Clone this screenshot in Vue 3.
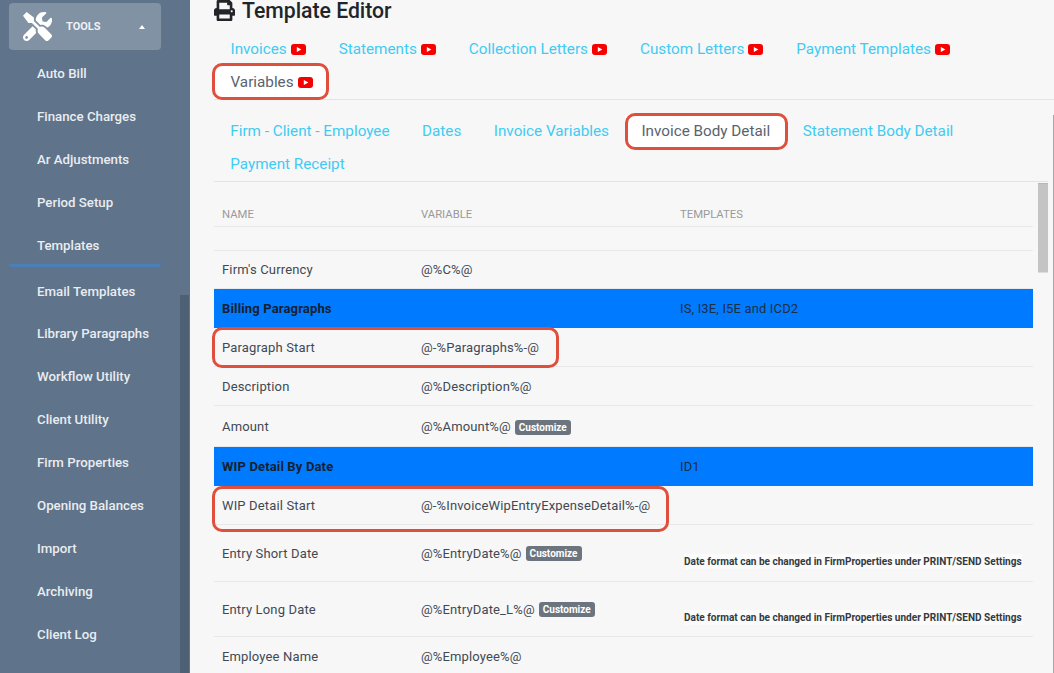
<template>
  <div class="page">
    <aside class="sidebar">
      <div class="tools-btn">
        <svg class="tools-icon" viewBox="0 0 512 512">
          <path fill="currentColor" d="M501.1 395.7L384 278.6c-23.1-23.1-57.6-27.6-85.4-13.9L192 158.1V96L64 0 0 64l96 128h62.1l106.6 106.6c-13.6 27.8-9.2 62.3 13.9 85.4l117.1 117.1c14.6 14.6 38.2 14.6 52.7 0l52.7-52.7c14.5-14.6 14.5-38.2 0-52.7zM331.7 225c28.3 0 54.9 11 74.9 31l19.4 19.4c15.8-6.9 30.8-16.5 43.8-29.5 37.1-37.1 49.7-89.3 37.9-136.7-2.2-9-13.5-12.1-20.1-5.5l-74.4 74.4-67.9-11.3L334 98.9l74.4-74.4c6.6-6.6 3.4-17.9-5.7-20.2-47.4-11.7-99.6.9-136.6 37.9-28.5 28.5-41.9 66.1-41.2 103.6l82.1 82.1c8.1-1.9 16.5-2.9 24.7-2.9zm-103.9 82l-56.7-56.7L18.7 402.8c-25 25-25 65.5 0 90.5s65.5 25 90.5 0l123.6-123.6c-7.6-19.9-9.9-41.6-5-62.7zM64 472c-13.2 0-24-10.8-24-24 0-13.3 10.7-24 24-24s24 10.7 24 24c0 13.2-10.7 24-24 24z"/>
        </svg>
        <span class="tools-label">TOOLS</span>
        <span class="caret"></span>
      </div>
      <nav class="side-list">
        <a v-for="item in sideItems" :key="item" class="side-item" :class="{ current: item === 'Templates' }">{{ item }}</a>
      </nav>
      <div class="side-scroll"></div>
    </aside>

    <main class="content">
      <h1 class="title">
        <svg class="print-icon" viewBox="0 0 512 512">
          <path fill="currentColor" d="M448 192V77.25c0-8.49-3.37-16.62-9.37-22.63L393.37 9.37c-6-6-14.14-9.37-22.63-9.37H96C78.33 0 64 14.33 64 32v160c-35.35 0-64 28.65-64 64v112c0 8.84 7.16 16 16 16h48v96c0 17.67 14.33 32 32 32h320c17.67 0 32-14.33 32-32v-96h48c8.84 0 16-7.16 16-16V256c0-35.35-28.65-64-64-64zm-64 256H128v-96h256v96zm0-224H128V64h192v48c0 8.84 7.16 16 16 16h48v96zm48 72c-13.25 0-24-10.75-24-24 0-13.26 10.75-24 24-24s24 10.74 24 24c0 13.25-10.75 24-24 24z"/>
        </svg>
        Template Editor
      </h1>

      <div class="tabs main-tabs">
        <a v-for="tab in mainTabs" :key="tab" class="tab" :class="{ active: tab === 'Variables' }">
          {{ tab }}
          <svg class="yt" viewBox="0 0 15 11">
            <rect width="15" height="11" rx="3" fill="#f70000" />
            <path d="M5.8 3 L10.4 5.5 L5.8 8 Z" fill="#fff" />
          </svg>
        </a>
      </div>

      <div class="tabs sub-tabs">
        <a v-for="tab in subTabs" :key="tab" class="tab" :class="{ active: tab === 'Invoice Body Detail' }">{{ tab }}</a>
      </div>

      <div class="table-wrap">
        <div class="table">
          <div class="row head">
            <div>Name</div>
            <div>Variable</div>
            <div>Templates</div>
          </div>
          <div class="row blank"></div>
          <div v-for="row in rows" :key="row.name" class="row" :class="[row.kind]">
            <div>{{ row.name }}</div>
            <div class="var-cell">
              {{ row.variable }}
              <span v-if="row.custom" class="badge">Customize</span>
            </div>
            <div class="tpl-cell">
              <span v-if="row.note" class="note">{{ row.note }}</span>
              <template v-else>{{ row.templates }}</template>
            </div>
          </div>
        </div>
        <div class="scroll-track"><div class="scroll-thumb"></div></div>
      </div>

      <div class="edge-line"></div>

      <!-- red annotation boxes drawn on top of the screenshot -->
      <div class="mark mark-variables"></div>
      <div class="mark mark-body"></div>
      <div class="mark mark-paragraph"></div>
      <div class="mark mark-wip"></div>
    </main>
  </div>
</template>

<script setup>
const sideItems = [
  'Auto Bill',
  'Finance Charges',
  'Ar Adjustments',
  'Period Setup',
  'Templates',
  'Email Templates',
  'Library Paragraphs',
  'Workflow Utility',
  'Client Utility',
  'Firm Properties',
  'Opening Balances',
  'Import',
  'Archiving',
  'Client Log',
  'Client Transfer',
]

const mainTabs = ['Invoices', 'Statements', 'Collection Letters', 'Custom Letters', 'Payment Templates', 'Variables']

const subTabs = ['Firm - Client - Employee', 'Dates', 'Invoice Variables', 'Invoice Body Detail', 'Statement Body Detail', 'Payment Receipt']

const dateNote = 'Date format can be changed in FirmProperties under PRINT/SEND Settings'

const rows = [
  { name: "Firm's Currency", variable: '@%C%@', kind: 'plain first' },
  { name: 'Billing Paragraphs', variable: '', templates: 'IS, I3E, I5E and ICD2', kind: 'section' },
  { name: 'Paragraph Start', variable: '@-%Paragraphs%-@', kind: 'plain' },
  { name: 'Description', variable: '@%Description%@', kind: 'plain' },
  { name: 'Amount', variable: '@%Amount%@', custom: true, kind: 'plain wide' },
  { name: 'WIP Detail By Date', variable: '', templates: 'ID1', kind: 'section' },
  { name: 'WIP Detail Start', variable: '@-%InvoiceWipEntryExpenseDetail%-@', kind: 'plain' },
  { name: 'Entry Short Date', variable: '@%EntryDate%@', custom: true, note: dateNote, kind: 'tall short-date' },
  { name: 'Entry Long Date', variable: '@%EntryDate_L%@', custom: true, note: dateNote, kind: 'tall' },
  { name: 'Employee Name', variable: '@%Employee%@', kind: 'plain' },
]
</script>

<style>
html,
body {
  margin: 0;
  height: 100%;
  overflow: hidden;
}
</style>

<style scoped>
.page {
  display: flex;
  height: 673px;
  overflow: hidden;
  font-family: Roboto, "Liberation Sans", sans-serif;
  background: #f7f7f7;
}

.sidebar {
  position: relative;
  width: 190px;
  flex-shrink: 0;
  background: #5f738a;
  padding: 3px 0 0 0;
  box-sizing: border-box;
  overflow: hidden;
}

.tools-btn {
  display: flex;
  align-items: center;
  width: 152px;
  height: 47px;
  margin-left: 9px;
  background: #8192a4;
  border-radius: 4px;
  color: #fff;
}

.tools-icon {
  width: 29px;
  height: 29px;
  margin-left: 14px;
  flex-shrink: 0;
}

.tools-label {
  margin-left: 14px;
  font-size: 11px;
  font-weight: 700;
  color: #eef1f4;
}

.caret {
  margin-left: 38px;
  width: 0;
  height: 0;
  border-left: 3.5px solid transparent;
  border-right: 3.5px solid transparent;
  border-bottom: 4px solid #fff;
}

.side-list {
  display: flex;
  flex-direction: column;
  padding-top: 3.4px;
}

.side-item {
  display: block;
  height: 42.9px;
  line-height: 42px;
  padding-left: 37px;
  font-size: 13.25px;
  font-weight: 500;
  color: #e9edf1;
}

.side-item:last-child {
  margin-top: 1px;
}

.side-item.current {
  width: 152px;
  margin-left: 9px;
  padding-left: 28px;
  height: 42px;
  margin-bottom: 3.6px;
  box-sizing: border-box;
  border-bottom: 3px solid #4a7fb8;
  border-radius: 0 0 3px 3px;
}

.side-scroll {
  position: absolute;
  left: 180px;
  top: 295px;
  bottom: 0;
  width: 9px;
  background: #4d6074;
}

.content {
  position: relative;
  flex: 1;
  min-width: 0;
  padding-left: 24px;
  background: #f7f7f7;
}

.title {
  display: flex;
  align-items: center;
  gap: 7px;
  height: 33px;
  margin: 0;
  padding-bottom: 12px;
  box-sizing: border-box;
  font-size: 21.2px;
  line-height: 1;
  font-weight: 500;
  color: #212529;
}

.print-icon {
  width: 21px;
  height: 21px;
}

.tabs {
  display: flex;
  flex-wrap: wrap;
  border-bottom: 1px solid #e3e4e6;
}

.tab {
  display: flex;
  align-items: center;
  gap: 4px;
  height: 33px;
  padding: 0 16.5px 1px;
  font-size: 15.25px;
  color: #3fcbf3;
  white-space: nowrap;
  box-sizing: border-box;
}

.tab.active {
  background: #fff;
  color: #59636e;
}

.yt {
  width: 15px;
  height: 11px;
  flex-shrink: 0;
}

.sub-tabs {
  width: 834px;
  padding-top: 15px;
}

.sub-tabs .tab {
  padding: 0 16.25px 1px;
}

.table-wrap {
  position: relative;
  padding-top: 1px;
}

.table {
  width: 819px;
  font-size: 13px;
  letter-spacing: 0.15px;
  color: #3f4954;
}

.row {
  display: grid;
  grid-template-columns: 199px 259px 1fr;
  align-items: center;
  height: 39px;
  padding-left: 8px;
  box-sizing: border-box;
  border-bottom: 1px solid #e8e8e8;
}

.row.head {
  height: 44px;
  padding-top: 19px;
  font-size: 11.3px;
  letter-spacing: 0;
  color: #9a9a9a;
  text-transform: uppercase;
}

.row.blank {
  height: 24px;
}

.row.first {
  height: 38px;
  padding-bottom: 1px;
}

.row.wide {
  height: 41px;
}

.row.section {
  height: 39px;
  padding-bottom: 1px;
  background: #007bff;
  border-bottom: 0;
  color: #1d2e45;
}

.row.section > div:first-child {
  font-weight: 700;
  color: #16202e;
}

.row.tall {
  align-items: start;
  height: 55px;
  padding-top: 20px;
}

.row.short-date {
  height: 57px;
  padding-top: 21px;
}

.var-cell {
  display: flex;
  align-items: center;
  gap: 4px;
}

.badge {
  margin-top: 2px;
  padding: 2px 4px;
  border-radius: 3px;
  background: #6c757d;
  color: #fff;
  font-size: 10px;
  font-weight: 700;
  letter-spacing: 0;
  line-height: 11px;
}

.row.tall .badge {
  margin-top: 0;
}

.tpl-cell {
  min-width: 0;
}

.note {
  display: inline-block;
  margin-top: 8px;
  margin-left: 4px;
  padding: 2px 0;
  background: #fbfbfb;
  font-size: 10.05px;
  font-weight: 700;
  letter-spacing: 0;
  color: #333a41;
  white-space: nowrap;
}

.scroll-track {
  position: absolute;
  left: 824px;
  top: 1px;
  width: 10px;
  height: 90px;
}

.scroll-thumb {
  height: 100%;
  box-sizing: border-box;
  background: #c4c4c4;
  border-top: 1px solid #b8b8b8;
  border-bottom: 1px solid #dcdcdc;
}

.edge-line {
  position: absolute;
  right: 0;
  top: 115px;
  bottom: 0;
  width: 1px;
  background: #a9a9a9;
}

.mark {
  position: absolute;
  box-sizing: border-box;
  border: 3.5px solid #e04f3c;
  border-radius: 10px;
  pointer-events: none;
}

.mark-variables {
  left: 22px;
  top: 63px;
  width: 117px;
  height: 37px;
}

.mark-body {
  left: 435px;
  top: 113px;
  width: 163px;
  height: 37px;
}

.mark-paragraph {
  left: 22px;
  top: 327px;
  width: 347px;
  height: 41px;
}

.mark-wip {
  left: 22px;
  top: 486px;
  width: 457px;
  height: 46px;
}
</style>
